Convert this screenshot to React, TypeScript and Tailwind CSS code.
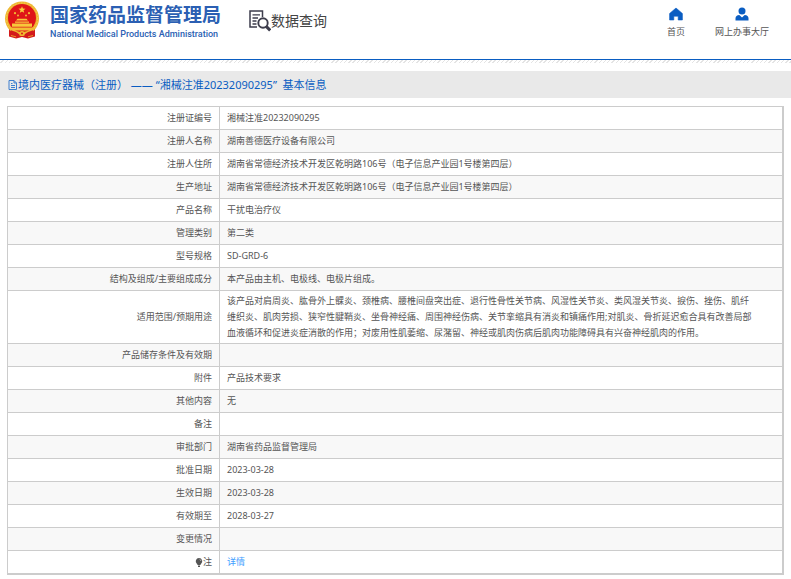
type Row = {
	label: string;
	value?: string;
};

const rows: Row[] = [
	{ label: '注册证编号', value: '湘械注准20232090295' },
	{ label: '注册人名称', value: '湖南善德医疗设备有限公司' },
	{ label: '注册人住所', value: '湖南省常德经济技术开发区乾明路106号（电子信息产业园1号楼第四层）' },
	{ label: '生产地址', value: '湖南省常德经济技术开发区乾明路106号（电子信息产业园1号楼第四层）' },
	{ label: '产品名称', value: '干扰电治疗仪' },
	{ label: '管理类别', value: '第二类' },
	{ label: '型号规格', value: 'SD-GRD-6' },
	{ label: '结构及组成/主要组成成分', value: '本产品由主机、电极线、电极片组成。' },
	{
		label: '适用范围/预期用途',
		value:
			'该产品对肩周炎、肱骨外上髁炎、颈椎病、腰椎间盘突出症、退行性骨性关节病、风湿性关节炎、类风湿关节炎、捩伤、挫伤、肌纤维织炎、肌肉劳损、狭窄性腱鞘炎、坐骨神经痛、周围神经伤病、关节挛缩具有消炎和镇痛作用;对肌炎、骨折延迟愈合具有改善局部血液循环和促进炎症消散的作用；对废用性肌萎缩、尿潴留、神经或肌肉伤病后肌肉功能障碍具有兴奋神经肌肉的作用。',
	},
	{ label: '产品储存条件及有效期' },
	{ label: '附件', value: '产品技术要求' },
	{ label: '其他内容', value: '无' },
	{ label: '备注' },
	{ label: '审批部门', value: '湖南省药品监督管理局' },
	{ label: '批准日期', value: '2023-03-28' },
	{ label: '生效日期', value: '2023-03-28' },
	{ label: '有效期至', value: '2028-03-27' },
	{ label: '变更情况' },
];

const Emblem = () => (
	<svg className="h-[38px] w-[36px] shrink-0" viewBox="0 0 36 38" aria-hidden="true">
		<path d="M5 27 L5 35.500 L12 37.500 L18 36 L24 37.500 L31 35.500 L31 27 Z" fill="#d31a1c" />
		<circle cx="18" cy="17.500" r="17" fill="#eeb62f" />
		<circle cx="18" cy="17.500" r="15.600" fill="none" stroke="#f6d163" strokeWidth="0.800" strokeDasharray="1.500 1.500" />
		<circle cx="18" cy="17" r="14" fill="#df1418" />
		<path d="M18 5.200l.9 2.400 2.600.1-2 1.600.7 2.500-2.200-1.400-2.200 1.400.7-2.500-2-1.600 2.600-.1z" fill="#f9cf3c" />
		<g fill="#f3b934">
			<circle cx="11" cy="12.200" r="1.100" />
			<circle cx="14" cy="14.600" r="1" />
			<circle cx="22" cy="14.600" r="1" />
			<circle cx="25" cy="12.200" r="1.100" />
		</g>
		<path d="M12 19.600l1.500-1.800h9l1.500 1.800zM11 20.400h14v1.300H11zM8 22.600h20v3.200H8z" fill="#f7c83a" />
		<path d="M6 26.600h24l-2.500 2.800h-19z" fill="#f3bd34" />
		<path d="M6.500 30.500Q12 32 15 34.500M29.500 30.500Q24 32 21 34.500" fill="none" stroke="#d31a1c" strokeWidth="2.600" />
		<circle cx="18" cy="32.500" r="2.600" fill="#efb92f" />
		<circle cx="18" cy="32.500" r="1" fill="#d8191c" />
		<path d="M7 34.500l5 1.300M29 34.500l-5 1.300" fill="none" stroke="#f0b52c" strokeWidth="0.800" />
	</svg>
);

const SearchDocIcon = () => (
	<svg className="h-[22px] w-[22px] shrink-0" viewBox="0 0 22 22" fill="none" stroke="#3d3d4c" aria-hidden="true">
		<path d="M13.500 7V1H1v16h7" strokeWidth="1.500" />
		<path d="M3.500 4.800h7.500M3.500 8h5.500M3.500 11h4M3.500 14h4" strokeWidth="1.300" />
		<circle cx="14" cy="13" r="4.700" strokeWidth="1.900" />
		<path d="M17.200 16.400l4 4" strokeWidth="3" />
	</svg>
);

const HomeIcon = () => (
	<svg className="h-[14px] w-[14px]" viewBox="0 0 14 14" fill="#0a5dc2" aria-hidden="true">
		<path d="M7 1L.6 6.500V13h4.200V9.200h4.400V13h4.200V6.500z" stroke="#0a5dc2" strokeWidth="0.600" strokeLinejoin="round" />
	</svg>
);

const UserIcon = () => (
	<svg className="h-[14px] w-[14px]" viewBox="0 0 14 14" fill="#0a5dc2" aria-hidden="true">
		<circle cx="7" cy="4" r="3.500" />
		<path d="M.5 13.500v-2.200C.5 9.300 2 8.300 4.300 8L7 10.600 9.700 8c2.300.3 3.800 1.300 3.800 3.300v2.200z" />
	</svg>
);

const DocIcon = () => (
	<svg className="h-[10px] w-[10px] shrink-0" viewBox="0 0 10 10" fill="none" stroke="#3f7fce" aria-hidden="true">
		<path d="M1 .5h5l2.500 2.500v6.500H1zM6 .5v2.500h2.500M3 3.500h1.500M3 5.500h4M3 7.500h4" />
	</svg>
);

const BulbIcon = () => (
	<svg className="inline-block h-[9px] w-[8px] align-middle" viewBox="0 0 8 9" fill="#555" aria-hidden="true">
		<path d="M4 0a3.300 3.300 0 0 1 2 5.900L5.300 7H2.700L2 5.900A3.300 3.300 0 0 1 4 0zM3 7.500h2V9H3z" />
		<path d="M4.600 1.400a2 2 0 0 1 1.300 1.400" fill="none" stroke="#fff" strokeWidth="0.600" />
	</svg>
);

const labelClass = 'border border-[#ccc] py-[2px] pr-[7px] text-right align-middle font-normal';
const valueClass = 'border border-[#ccc] py-[2px] pl-[7px] pr-[28px] align-middle';

export default function App() {
	return (
		<div className="bg-white font-['Noto_Sans','Noto_Sans_CJK_SC',sans-serif] text-[#555]">
			<header className="flex h-[60px] items-start justify-between border-b border-[#0a5dc2] pl-1 pr-[22px]">
				<div className="flex items-start">
					<div className="flex gap-[10px] pt-[1px]">
						<Emblem />
						<div className="flex flex-col text-[#2b5fb3]">
							<span className="text-[19px] font-bold leading-[28px]">国家药品监督管理局</span>
							<span className="font-[Roboto,sans-serif] text-[9px] font-medium leading-[10px]">
								National Medical Products Administration
							</span>
						</div>
					</div>
					<div className="ml-[28px] flex items-center pt-[9px]">
						<SearchDocIcon />
						<h1 className="text-[14px] leading-[24px] text-[#444]">数据查询</h1>
					</div>
				</div>
				<nav className="flex gap-[30px] pt-[7px] text-[9px] leading-[16px]">
					<a href="#home" className="flex flex-col items-center gap-[3px]">
						<HomeIcon />
						首页
					</a>
					<a href="#service" className="flex flex-col items-center gap-[3px]">
						<UserIcon />
						网上办事大厅
					</a>
				</nav>
			</header>
			<div className="h-[3px] bg-[repeating-linear-gradient(135deg,#fff_0_2px,#e4e4e4_2px_3px)]" />

			<h2 className="mt-[8px] flex h-[27px] items-center bg-[#e9e9e9] pl-[8px] pt-[1px] text-[11px] text-[#0a5dc2]">
				<DocIcon />
				<span>境内医疗器械（注册） ——&nbsp;“湘械注准20232090295”&nbsp;&nbsp;基本信息</span>
			</h2>

			<main className="px-[7px] pb-[3px] pt-[8px]">
				<table className="w-full border-collapse border-b-2 border-r-2 border-[#ccc] text-[9px] leading-[16px]">
					<tbody>
						{rows.map((row) => (
							<tr key={row.label} className="h-[23px] even:bg-[#f8f8f8]">
								<th scope="row" className={`${labelClass} w-[212px]`}>
									{row.label}
								</th>
								<td className={valueClass}>{row.value}</td>
							</tr>
						))}
						<tr className="h-[23px]">
							<th scope="row" className={labelClass}>
								<BulbIcon />注
							</th>
							<td className={valueClass}>
								<a href="#detail" className="text-[#409eff]">
									详情
								</a>
							</td>
						</tr>
					</tbody>
				</table>
			</main>
		</div>
	);
}
